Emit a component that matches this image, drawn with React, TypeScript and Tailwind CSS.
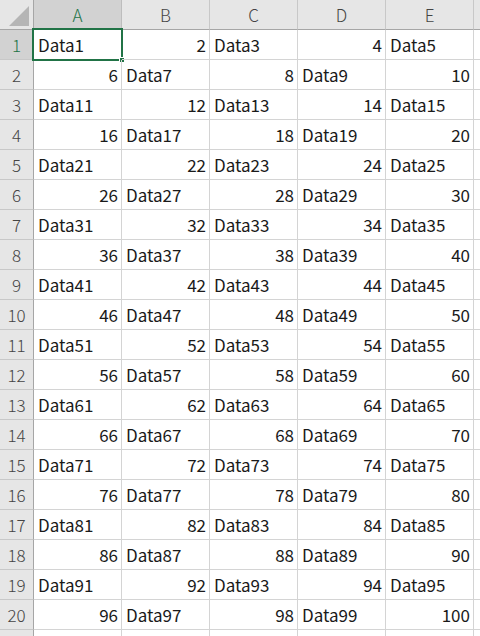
const COLS = ['A', 'B', 'C', 'D', 'E'];
const ROWS = Array.from({ length: 21 }, (_, i) => i + 1);

// row r, column c -> the value Excel shows there (Data / number alternating)
function cellValue(r: number, c: number): { text: string; num: boolean } | null {
  if (r > 20) return null;
  const n = (r - 1) * 5 + c + 1;
  if (n % 2 === 1) return { text: `Data${n}`, num: false };
  return { text: String(n), num: true };
}

const font = { fontFamily: '"Noto Sans CJK JP", "Noto Sans", sans-serif' };

export default function App() {
  return (
    <div className="w-[480px] h-[636px] overflow-hidden bg-white" style={font}>
      <div className="grid grid-cols-[34px_repeat(5,88px)_1fr] auto-rows-[30px]">
        {/* ===== Header row ===== */}
        <div className="relative bg-[#e6e6e6] border-r border-b border-[#a6a6a6]">
          <svg className="absolute right-[4px] bottom-[3px]" width="20" height="20" viewBox="0 0 20 20">
            <polygon points="20,0 20,20 0,20" fill="#b5b5b5" />
          </svg>
        </div>
        {COLS.map((c, i) => (
          <div
            key={c}
            className={`flex items-center justify-center text-[17px] font-light border-b ${
              i === 0
                ? 'bg-[#d2d2d2] text-[#217346] border-r border-r-[#bdbdbd] border-b-[#a6a6a6]'
                : 'bg-[#e6e6e6] text-[#444] border-r border-r-[#c8c8c8] border-b-[#a6a6a6]'
            }`}
          >
            {c}
          </div>
        ))}
        <div className="bg-[#e6e6e6] border-b border-[#a6a6a6]" />

        {/* ===== Body ===== */}
        {ROWS.map((r) => (
          <div key={r} className="contents">
            <div
              className={`flex items-center justify-center text-[17px] font-light border-r border-b border-r-[#a6a6a6] border-b-[#c8c8c8] ${
                r === 1 ? 'bg-[#d2d2d2] text-[#217346]' : 'bg-[#e6e6e6] text-[#444]'
              }`}
            >
              {r <= 20 ? r : null}
            </div>
            {COLS.map((c, ci) => {
              const v = cellValue(r, ci);
              return (
                <div
                  key={c}
                  className={`relative flex items-center text-[17px] text-[#1a1a1a] border-r border-b border-[#d4d4d4] ${
                    v?.num ? 'justify-end pr-[3px]' : 'justify-start pl-[4px]'
                  }`}
                >
                  {v?.text}
                  {r === 1 && ci === 0 && (
                    <div className="absolute -left-[2px] -top-[2px] -right-[2px] -bottom-[2px] border-2 border-[#217346]">
                      <div className="absolute -right-[4px] -bottom-[4px] w-[6px] h-[6px] bg-[#217346] border border-white" />
                    </div>
                  )}
                </div>
              );
            })}
            <div className="border-b border-[#d4d4d4]" />
          </div>
        ))}
      </div>
    </div>
  );
}
